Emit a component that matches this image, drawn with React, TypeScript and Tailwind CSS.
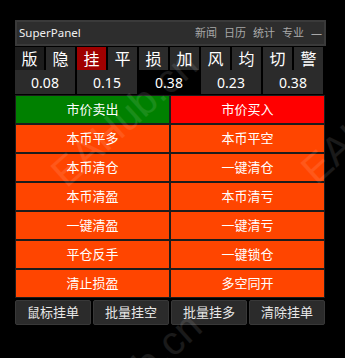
const groups = [
  { labels: ['版', '隐'], value: '0.08' },
  { labels: ['挂', '平'], value: '0.15' },
  { labels: ['损', '加'], value: '0.38' },
  { labels: ['风', '均'], value: '0.23' },
  { labels: ['切', '警'], value: '0.38' },
];

const actions = [
  ['本币平多', '本币平空'],
  ['本币清仓', '一键清仓'],
  ['本币清盈', '本币清亏'],
  ['一键清盈', '一键清亏'],
  ['平仓反手', '一键锁仓'],
  ['清止损盈', '多空同开'],
];

const bottom = ['鼠标挂单', '批量挂空', '批量挂多', '清除挂单'];

const labelBg = (label: string) => {
  if (label === '版') return 'bg-[#1c1c1c]';
  if (label === '挂') return 'bg-[#a00000]';
  return 'bg-[#2b2b2b]';
};

const Watermark = ({ className }: { className: string }) => (
  <div
    className={
      'pointer-events-none absolute -translate-x-1/2 -translate-y-1/2 -rotate-[42deg] whitespace-nowrap text-[40px] font-["Liberation_Sans",sans-serif] text-white/10 ' +
      className
    }
  >
    EAHub.cn
  </div>
);

export default function App() {
  return (
    <div className="relative h-[358px] w-[345px] overflow-hidden bg-black font-['Noto_Sans','Noto_Sans_CJK_SC',sans-serif]">
      <div className="ml-[15px] flex w-[311px] flex-col pt-[20px]">
        {/* title bar */}
        <div className="flex h-[26px] items-center justify-between border-2 border-[#3a3a3a] bg-[#2d2d2d] pl-[2px] pr-[2px]">
          <span className="text-[11.5px] text-[#f0f0f0]">SuperPanel</span>
          <div className="flex items-center gap-[7px] text-[11px] text-[#a8a8a8]">
            <span>新闻</span>
            <span>日历</span>
            <span>统计</span>
            <span>专业</span>
            <span>—</span>
          </div>
        </div>

        {/* toggles + values */}
        <div className="mt-px grid w-[308px] grid-cols-5 gap-[2px]">
          {groups.map((g, i) => (
            <div key={i} className="flex flex-col">
              <div className="grid h-[23px] grid-cols-2 gap-[2px]">
                {g.labels.map((l) => (
                  <div
                    key={l}
                    className={`flex items-center justify-center text-[16px] text-white ${labelBg(l)}`}
                  >
                    {l}
                  </div>
                ))}
              </div>
              <div
                className={`flex h-[24px] items-center justify-center text-[14px] text-white ${
                  i === 2 ? 'bg-black' : 'bg-[#2b2b2b]'
                }`}
              >
                {g.value}
              </div>
            </div>
          ))}
        </div>

        {/* action buttons */}
        <div className="mt-px grid w-[310px] grid-cols-2">
          <div className="flex h-[29px] items-center justify-center border border-[#1c1c1c] bg-[#008000] text-[13px] text-white">
            市价卖出
          </div>
          <div className="flex h-[29px] items-center justify-center border border-[#1c1c1c] bg-[#ff0000] text-[13px] text-white">
            市价买入
          </div>
          {actions.flat().map((a, i) => (
            <div
              key={i}
              className="flex h-[29px] items-center justify-center border border-[#1c1c1c] bg-[#ff4500] text-[13px] text-white"
            >
              {a}
            </div>
          ))}
        </div>

        {/* bottom buttons */}
        <div className="mt-[2px] grid w-[310px] grid-cols-4 gap-[2px]">
          {bottom.map((b) => (
            <div
              key={b}
              className="flex h-[25px] items-center justify-center rounded-[2px] border border-[#383838] bg-[#2b2b2b] text-[13px] text-[#e8e8e8]"
            >
              {b}
            </div>
          ))}
        </div>
      </div>

      <Watermark className="left-[124px] top-[118px]" />
      <Watermark className="left-[374px] top-[115px]" />
      <Watermark className="left-[128px] top-[380px]" />
    </div>
  );
}
